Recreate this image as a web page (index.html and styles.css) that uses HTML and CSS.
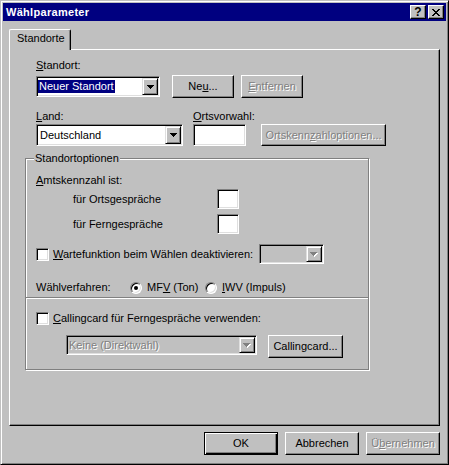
FILE: index.html
```html
<!doctype html>
<html>
    <head>
        <meta charset="utf-8" />
        <meta name="viewport" content="width=device-width" />
        <title>Wählparameter</title>
        <link rel="stylesheet" href="styles.css">
    </head>
    <body>
        <div class="window">
            <div class="titlebar">
                <span class="caption">Wählparameter</span>
                <div class="caption-buttons">
                    <button class="cap-btn help">?</button>
                    <button class="cap-btn close">
                        <svg width="8" height="7" viewBox="0 0 8 7"><path d="M0 0h2v1H0zM6 0h2v1H6zM1 1h2v1H1zM5 1h2v1H5zM2 2h4v1H2zM3 3h2v1H3zM2 4h4v1H2zM1 5h2v1H1zM5 5h2v1H5zM0 6h2v1H0zM6 6h2v1H6z" /></svg>
                    </button>
                </div>
            </div>
            <div class="dialog">
                <div class="tabs"><div class="tab">Standorte</div></div>
                <div class="panel">
                    <div class="location">
                        <div class="label"><u>S</u>tandort:</div>
                        <div class="row row-standort">
                            <div class="field combo combo-standort">
                                <span class="value"><span class="selected">Neuer Standort</span></span>
                                <span class="drop"><svg width="7" height="4" viewBox="0 0 7 4"><path d="M0 0h7v1H0zM1 1h5v1H1zM2 2h3v1H2zM3 3h1v1H3z" /></svg></span>
                            </div>
                            <button class="btn btn-neu">Ne<u>u</u>...</button>
                            <button class="btn btn-entfernen dis" disabled><u>E</u>ntfernen</button>
                        </div>
                        <div class="row labels-land">
                            <div class="label label-land"><u>L</u>and:</div>
                            <div class="label"><u>O</u>rtsvorwahl:</div>
                        </div>
                        <div class="row row-land">
                            <div class="field combo combo-land">
                                <span class="value">Deutschland</span>
                                <span class="drop"><svg width="7" height="4" viewBox="0 0 7 4"><path d="M0 0h7v1H0zM1 1h5v1H1zM2 2h3v1H2zM3 3h1v1H3z" /></svg></span>
                            </div>
                            <div class="field input-vorwahl"></div>
                            <button class="btn btn-optionen dis" disabled>Ortskenn<u>z</u>ahloptionen...</button>
                        </div>
                    </div>
                    <div class="group">
                        <div class="group-title">Standortoptionen</div>
                        <div class="label amt"><u>A</u>mtskennzahl ist:</div>
                        <div class="row prefix prefix-orts">
                            <span class="prefix-label">für Ortsgespräche</span>
                            <div class="field prefix-box"></div>
                        </div>
                        <div class="row prefix prefix-fern">
                            <span class="prefix-label">für Ferngespräche</span>
                            <div class="field prefix-box"></div>
                        </div>
                        <div class="row wait">
                            <label class="check-label wait-label"><span class="check"></span><span><u>W</u>artefunktion beim Wählen deaktivieren:</span></label>
                            <div class="field combo combo-wait disabled">
                                <span class="value"></span>
                                <span class="drop"><svg width="8" height="5" viewBox="0 0 8 5"><path class="shine" d="M1 1h7v1H1zM2 2h5v1H2zM3 3h3v1H3zM4 4h1v1H4z" /><path class="grey" d="M0 0h7v1H0zM1 1h5v1H1zM2 2h3v1H2zM3 3h1v1H3z" /></svg></span>
                            </div>
                        </div>
                        <div class="row dialmode">
                            <span class="dialmode-label">Wählverfahren:</span>
                            <label class="radio-label mfv"><span class="radio on"></span><span>MF<u>V</u> (Ton)</span></label>
                            <label class="radio-label"><span class="radio"></span><span><u>I</u>WV (Impuls)</span></label>
                        </div>
                        <div class="separator"></div>
                        <div class="row card">
                            <label class="check-label"><span class="check"></span><span><u>C</u>allingcard für Ferngespräche verwenden:</span></label>
                        </div>
                        <div class="row card-select">
                            <div class="field combo combo-card disabled">
                                <span class="value dis">Keine (Direktwahl)</span>
                                <span class="drop"><svg width="8" height="5" viewBox="0 0 8 5"><path class="shine" d="M1 1h7v1H1zM2 2h5v1H2zM3 3h3v1H3zM4 4h1v1H4z" /><path class="grey" d="M0 0h7v1H0zM1 1h5v1H1zM2 2h3v1H2zM3 3h1v1H3z" /></svg></span>
                            </div>
                            <button class="btn btn-card">Callingcard...</button>
                        </div>
                    </div>
                </div>
                <div class="buttons">
                    <button class="btn btn-default">OK</button>
                    <button class="btn">Abbrechen</button>
                    <button class="btn dis" disabled>Ü<u>b</u>ernehmen</button>
                </div>
            </div>
        </div>
    </body>
</html>
```

FILE: styles.css
```css
* {
    box-sizing: border-box;
}
body {
    margin: 0;
    background: #c0c0c0;
    font-family: "Liberation Sans", Arial, sans-serif;
    font-size: 11px;
    line-height: 13px;
    color: #000;
}
button {
    font: inherit;
    color: inherit;
    margin: 0;
    padding: 0;
    background: #c0c0c0;
}
u {
    text-underline-offset: 1px;
}
.dis {
    color: #808080;
    text-shadow: 1px 1px #fff;
}

/* window frame */
.window {
    width: 449px;
    height: 465px;
    padding: 2px;
    border: 1px solid;
    border-color: #c0c0c0 #000 #000 #c0c0c0;
    box-shadow: inset 1px 1px #fff, inset -1px -1px #808080;
    display: flex;
    flex-direction: column;
}
.titlebar {
    height: 18px;
    background: #000080;
    color: #fff;
    font-weight: bold;
    display: flex;
    align-items: center;
    justify-content: space-between;
    padding: 0 2px 0 3px;
}
.caption {
    letter-spacing: 0.3px;
}
.caption-buttons {
    display: flex;
    gap: 2px;
}
.cap-btn {
    width: 16px;
    height: 14px;
    border: 1px solid;
    border-color: #fff #000 #000 #fff;
    box-shadow: inset -1px -1px #808080;
    display: flex;
    align-items: center;
    justify-content: center;
    color: #000;
    font-weight: bold;
    font-size: 12px;
    line-height: 12px;
}
.cap-btn svg {
    display: block;
}

/* dialog body */
.dialog {
    flex: 1;
    padding: 8px 6px 0 6px;
}
.tabs {
    height: 20px;
    display: flex;
}
.tab {
    position: relative;
    z-index: 1;
    width: 62px;
    height: 21px;
    padding: 2px 0 0 7px;
    background: #c0c0c0;
    border: 1px solid;
    border-bottom: none;
    border-color: #fff #000 #c0c0c0 #fff;
    border-radius: 2px 2px 0 0;
    box-shadow: inset -1px 0 #808080;
}
.panel {
    height: 377px;
    padding: 9px 0 0 15px;
    border: 1px solid;
    border-color: #fff #000 #000 #fff;
    box-shadow: inset -1px -1px #808080;
}
.location {
    padding-left: 11px;
}
.label {
    height: 13px;
    white-space: nowrap;
}
.row {
    display: flex;
    align-items: center;
}

/* 3d controls */
.field {
    border: 1px solid;
    border-color: #808080 #fff #fff #808080;
    box-shadow: inset 1px 1px #000, inset -1px -1px #dfdfdf;
    background: #fff;
}
.field.disabled {
    background: #c0c0c0;
}
.combo {
    display: flex;
    padding: 1px;
}
.combo .value {
    flex: 1;
    display: flex;
    align-items: center;
    padding-left: 2px;
    white-space: nowrap;
}
.combo .drop {
    width: 16px;
    border: 1px solid;
    border-color: #dfdfdf #000 #000 #dfdfdf;
    box-shadow: inset 1px 1px #fff, inset -1px -1px #808080;
    background: #c0c0c0;
    display: flex;
    align-items: center;
    justify-content: center;
}
.drop svg {
    display: block;
}
.drop .grey {
    fill: #808080;
}
.drop .shine {
    fill: #fff;
}
.btn {
    height: 23px;
    border: 1px solid;
    border-color: #fff #000 #000 #fff;
    box-shadow: inset -1px -1px #808080;
    display: flex;
    align-items: center;
    justify-content: center;
    white-space: nowrap;
}
.btn-default {
    border-color: #000;
    box-shadow: inset 1px 1px #fff, inset -1px -1px #000, inset -2px -2px #808080;
}
.check {
    width: 13px;
    height: 13px;
    flex: none;
    border: 1px solid;
    border-color: #808080 #fff #fff #808080;
    box-shadow: inset 1px 1px #000, inset -1px -1px #dfdfdf;
    background: #fff;
}
.radio {
    width: 12px;
    height: 12px;
    flex: none;
    border-radius: 50%;
    border: 1px solid;
    border-color: #808080 #fff #fff #808080;
    box-shadow: inset 1px 1px #000, inset -1px -1px #dfdfdf;
    background: #fff;
    display: flex;
    align-items: center;
    justify-content: center;
}
.radio.on::after {
    content: "";
    width: 4px;
    height: 4px;
    border-radius: 50%;
    background: #000;
}
.check-label,
.radio-label {
    display: flex;
    align-items: center;
    white-space: nowrap;
}
.check-label {
    gap: 4px;
}
.radio-label {
    gap: 5px;
}

/* Standort / Land */
.row-standort {
    margin-top: 3px;
    height: 23px;
}
.combo-standort {
    width: 124px;
    height: 21px;
}
.combo-standort .value {
    padding-left: 0;
}
.selected {
    background: #000080;
    color: #fff;
    padding: 0 1px;
}
.btn-neu {
    width: 62px;
    margin-left: 12px;
}
.btn-entfernen {
    width: 62px;
    margin-left: 7px;
}
.labels-land {
    margin-top: 12px;
}
.label-land {
    width: 157px;
}
.row-land {
    margin-top: 1px;
    height: 22px;
    align-items: flex-start;
}
.combo-land {
    width: 147px;
    height: 22px;
}
.input-vorwahl {
    width: 53px;
    height: 22px;
    margin-left: 10px;
}
.btn-optionen {
    width: 125px;
    height: 22px;
    margin-left: 15px;
}

/* Standortoptionen */
.group {
    width: 344px;
    margin-top: 12px;
    padding: 0 0 11px 10px;
    border: 1px solid #808080;
    box-shadow: inset 1px 1px #fff, 1px 1px #fff;
}
.group-title {
    width: fit-content;
    height: 13px;
    margin: -7px 0 0 -2px;
    padding: 0 1px;
    background: #c0c0c0;
}
.amt {
    margin-top: 9px;
}
.prefix {
    height: 20px;
}
.prefix-orts {
    margin-top: 2px;
}
.prefix-fern {
    margin-top: 5px;
}
.prefix-label {
    width: 181px;
    padding-left: 37px;
}
.prefix-box {
    width: 22px;
    height: 20px;
}
.wait {
    margin-top: 10px;
    height: 20px;
}
.wait-label {
    width: 223px;
}
.combo-wait {
    width: 65px;
    height: 20px;
}
.dialmode {
    margin-top: 17px;
    height: 13px;
}
.dialmode-label {
    width: 94px;
}
.mfv {
    width: 75px;
}
.separator {
    margin: 3px 0 0 -10px;
    border-top: 1px solid #808080;
    border-bottom: 1px solid #fff;
}
.card {
    margin-top: 13px;
    height: 13px;
}
.card-select {
    margin-top: 10px;
    padding-left: 30px;
    align-items: flex-start;
}
.combo-card {
    width: 191px;
    height: 20px;
}
.combo-card .value {
    padding-left: 1px;
}
.btn-card {
    width: 75px;
    margin-left: 11px;
}

/* bottom buttons */
.buttons {
    margin-top: 6px;
    display: flex;
    justify-content: flex-end;
    gap: 7px;
}
.buttons .btn {
    width: 74px;
}
```
